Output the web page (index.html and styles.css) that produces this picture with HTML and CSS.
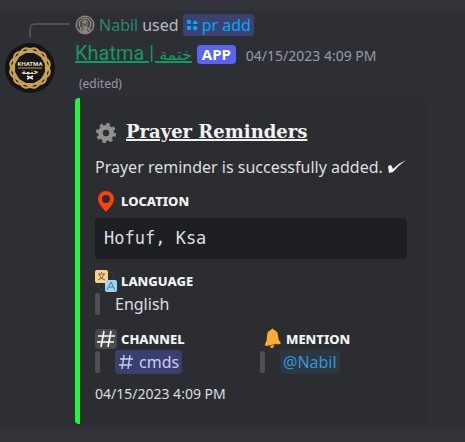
FILE: index.html
```
<!DOCTYPE html>
<html lang="en">
<head>
  <meta charset="UTF-8">
  <title>Khatma - Prayer Reminders</title>
  <meta name="viewport" content="width=device-width, initial-scale=1.0">
  <link rel="stylesheet" href="styles.css">
</head>
<body>
<main class="message">
  <div class="side">
    <div class="reply-line"></div>
    <svg class="avatar" viewBox="0 0 50 50" role="img" aria-label="Khatma">
      <circle cx="25" cy="25" r="25" fill="#151515"/>
      <g fill="none" stroke="#caa052" stroke-width="2.2">
        <rect x="9" y="9" width="32" height="32" rx="6"/>
        <rect x="9" y="9" width="32" height="32" rx="6" transform="rotate(30 25 25)"/>
        <rect x="9" y="9" width="32" height="32" rx="6" transform="rotate(60 25 25)"/>
      </g>
      <path d="M13 25h24" stroke="#caa052"/>
      <text x="25" y="23" class="logo-text">KHATMA</text>
      <text x="25" y="31" class="logo-text arabic">ختمة</text>
      <path d="M22 33l6 3M28 33l-6 3" stroke="#eee" stroke-width="1.4"/>
    </svg>
  </div>

  <div class="content">
    <div class="reply">
      <svg class="user-icon" viewBox="0 0 20 20">
        <circle cx="10" cy="10" r="10" fill="#4b4a48"/>
        <g fill="none" stroke="#969390">
          <circle cx="10" cy="10" r="8.7"/>
          <circle cx="10" cy="9" r="5.8"/>
        </g>
        <path d="M7 7q3-5 6 0l-1 5q4 1 4 5-6 4-12 0 0-4 4-5z" fill="#8b8580"/>
        <path d="M8 8l2 3 2-4M6 16l3-3M12 14l2 3" stroke="#3a3836" fill="none"/>
      </svg>
      <a href="#" class="user">Nabil</a>
      <span>used</span>
      <a href="#" class="command">
        <svg viewBox="0 0 12 12" width="12" height="12" fill="#00a8fc">
          <path d="M1 1h3l1 1v3H2L1 4zM7 5V3l2-2 3 3-1 1zM1 7h4v3l-1 1H2l-1-1zM7 7h3l2 2-2 2-1 1-2-2z"/>
        </svg>
        pr add
      </a>
    </div>

    <header class="header">
      <a href="#" class="author">Khatma | <span class="arabic">ختمة</span></a>
      <span class="app">APP</span>
      <time class="time">04/15/2023 4:09 PM</time>
    </header>
    <div class="edited">(edited)</div>

    <article class="embed">
      <h1 class="title">
        <svg viewBox="0 0 22 22" width="22" height="22">
          <g fill="none" stroke="#909090">
            <circle cx="11" cy="12" r="8.6" stroke-width="3" stroke-dasharray="3.4 3.35"/>
            <circle cx="11" cy="12" r="5.6" stroke-width="4.8"/>
          </g>
        </svg>
        <a href="#">Prayer Reminders</a>
      </h1>
      <p class="description">
        Prayer reminder is successfully added.
        <svg viewBox="0 0 20 16" width="20" height="16"><path d="M1 7l3-1 2 4Q12 4 19 1 12 6 6 13L2 14z" fill="#f4f4f4"/></svg>
      </p>

      <section>
        <h2 class="name">
          <svg viewBox="0 0 22 22" width="22" height="22"><path fill="#ff4203" fill-rule="evenodd" d="M11 1a8 8 0 0 0-8 8c0 5 5 9 8 13 3-4 8-8 8-13a8 8 0 0 0-8-8zm0 4a4 4 0 1 1 0 8 4 4 0 0 1 0-8z"/></svg>
          LOCATION
        </h2>
        <pre class="code"><code>Hofuf, Ksa</code></pre>
      </section>

      <section class="language">
        <h2 class="name">
          <svg viewBox="0 0 22 22" width="22" height="22" fill="none">
            <path d="M14 2q5 0 5 6M3 14q0 5 5 6" stroke="#35405b"/>
            <rect width="13" height="13" rx="2" fill="#ffd08a"/>
            <path d="M6 2l1 1M3 4h7M4 4q1 5 6 6M9 4q-1 5-6 6" stroke="#77634a"/>
            <rect x="10" y="10" width="12" height="12" rx="2" fill="#9bd7f5"/>
            <path d="M12 20l4-8 4 8M14 17h4" stroke="#4d7893"/>
          </svg>
          LANGUAGE
        </h2>
        <blockquote>English</blockquote>
      </section>

      <div class="row">
        <section>
          <h2 class="name">
            <svg viewBox="0 0 22 22" width="22" height="22">
              <rect y="1" width="22" height="20" rx="4" fill="#4a4a4a"/>
              <path d="M9 3L6 19M16 3l-3 16M3 8h17M2 14h17" stroke="#fff" stroke-width="1.6" fill="none"/>
            </svg>
            CHANNEL
          </h2>
          <blockquote>
            <a href="#" class="channel">
              <svg viewBox="0 0 16 16" width="16" height="16"><path d="M6 1L4 15M12 1l-2 14M2 5h13M1 11h13" stroke="#c9cdfb" stroke-width="1.4" fill="none"/></svg>
              cmds
            </a>
          </blockquote>
        </section>
        <section>
          <h2 class="name">
            <svg viewBox="0 0 22 22" width="22" height="22" fill="#ffac33"><path d="M11 2q1-3 3 0 4 1 4 6 0 4 3 7-1 2-5 1L6 18q-2-1 0-4 1-2 1-6 0-5 4-6zM10 18l4-1q0 3-2 3t-2-2z"/></svg>
            MENTION
          </h2>
          <blockquote><a href="#" class="mention">@Nabil</a></blockquote>
        </section>
      </div>
      <footer><time>04/15/2023 4:09 PM</time></footer>
    </article>
  </div>
</main>
</body>
</html>
```
FILE: styles.css
```
* {
  box-sizing: border-box;
}
body {
  margin: 0;
  padding: 11px 0 14px;
  background-color: #313338;
  color: #dbdee1;
  font-family: "Noto Sans", sans-serif;
  font-size: 16px;
  line-height: 22px;
}
a {
  color: inherit;
  text-decoration: none;
}
h1, h2, p, pre, blockquote {
  margin: 0;
}
svg {
  flex-shrink: 0;
}
.message {
  display: flex;
  padding: 2px 38px 4px 5px;
  background-color: #2e2f34;
}
.side {
  width: 70px;
  flex-shrink: 0;
}
.reply-line {
  width: 41px;
  height: 15px;
  margin: 10px 0 5px 24px;
  border-top: 2px solid #4e5058;
  border-left: 2px solid #4e5058;
  border-top-left-radius: 6px;
}
.avatar {
  display: block;
  width: 50px;
  height: 50px;
}
.logo-text {
  fill: #eee1c4;
  font-family: Roboto, sans-serif;
  font-size: 6px;
  font-weight: bold;
  text-anchor: middle;
}
.logo-text.arabic {
  font-family: "DejaVu Sans", sans-serif;
  font-size: 7px;
}
.content {
  flex: 1;
  min-width: 0;
}
.reply {
  display: flex;
  align-items: center;
  gap: 4px;
  height: 23px;
  color: #b5bac1;
}
.user-icon {
  width: 20px;
  height: 20px;
}
.user {
  color: #258a6d;
}
.command {
  display: flex;
  align-items: center;
  gap: 4px;
  padding: 0 3px;
  border-radius: 3px;
  background-color: #3c4270;
  color: #00a8fc;
}
.header {
  display: flex;
  align-items: center;
  gap: 5px;
  height: 36px;
  white-space: nowrap;
}
.author {
  color: #119a65;
  font-family: Roboto, sans-serif;
  font-size: 20px;
  text-decoration: underline;
  text-decoration-thickness: 2px;
}
.author .arabic {
  font-family: "DejaVu Sans", sans-serif;
  font-size: 16px;
}
.app {
  padding: 0 5px;
  border-radius: 4px;
  background-color: #5865f2;
  color: #fff;
  font-size: 15px;
  font-weight: bold;
  line-height: 19px;
}
.time {
  margin-left: 5px;
  padding-top: 3px;
  color: #949ba4;
  font-size: 14px;
}
.edited {
  padding: 0 4px;
  color: #949ba4;
  font-size: 12px;
  line-height: 24px;
}
.embed {
  margin-top: 2px;
  padding: 22px 20px 19px 15px;
  border-left: 5px solid #1ff83e;
  border-radius: 4px;
  background-color: #2b2d31;
}
.title {
  display: flex;
  align-items: center;
  gap: 9px;
  color: #f2f3f5;
  font-family: "DejaVu Serif", serif;
  font-size: 18px;
  line-height: 24px;
}
.title a {
  text-decoration: underline;
  text-decoration-thickness: 2px;
}
.description {
  display: flex;
  align-items: center;
  gap: 4px;
  margin: 12px 0;
  white-space: nowrap;
}
.name {
  display: flex;
  align-items: center;
  gap: 4px;
  color: #f2f3f5;
  font-size: 13px;
  font-weight: 800;
  line-height: 22px;
}
.code {
  margin-top: 6px;
  padding: 9px;
  border-radius: 4px;
  background-color: #1e1f22;
}
.code code {
  font-family: "DejaVu Sans Mono", monospace;
  font-size: 17px;
}
.language {
  margin: 11px 0 12px;
}
blockquote {
  display: flex;
  align-items: center;
  height: 24px;
}
blockquote::before {
  content: "";
  width: 5px;
  height: 22px;
  margin-right: 15px;
  border-radius: 3px;
  background-color: #4e5058;
}
.row {
  display: grid;
  grid-template-columns: 1fr 1fr;
  gap: 18px;
}
.channel, .mention {
  display: flex;
  align-items: center;
  gap: 5px;
  padding: 1px 3px;
  border-radius: 4px;
}
.channel {
  background-color: #3b3f6c;
  color: #c9cdfb;
}
.mention {
  background-color: #2c3742;
  color: #3498db;
}
footer {
  margin-top: 9px;
  font-size: 14px;
}
```
